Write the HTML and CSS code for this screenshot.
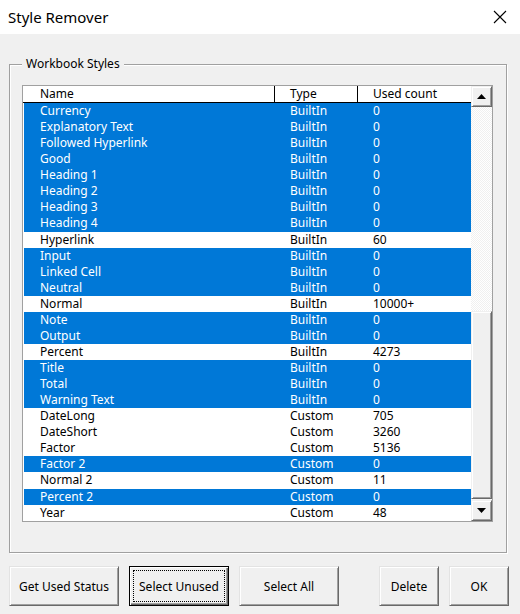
FILE: index.html
```html
<!DOCTYPE html>
<html lang="en">
<head>
    <meta charset="UTF-8">
    <title>Style Remover</title>
    <link rel="stylesheet" href="styles.css">
</head>
<body>
    <header class="titlebar">
        <span class="title">Style Remover</span>
        <svg class="close" width="14" height="14" viewBox="0 0 14 14">
            <path d="M1 1L13 13M13 1L1 13" stroke="#000" stroke-width="1.1" fill="none"/>
        </svg>
    </header>

    <fieldset class="group">
        <legend>Workbook Styles</legend>
        <div class="listbox">
            <div class="list">
                <div class="row head">
                    <span>Name</span><span>Type</span><span>Used count</span>
                </div>
                <div class="row sel"><span>Currency</span><span>BuiltIn</span><span>0</span></div>
                <div class="row sel"><span>Explanatory Text</span><span>BuiltIn</span><span>0</span></div>
                <div class="row sel"><span>Followed Hyperlink</span><span>BuiltIn</span><span>0</span></div>
                <div class="row sel"><span>Good</span><span>BuiltIn</span><span>0</span></div>
                <div class="row sel"><span>Heading 1</span><span>BuiltIn</span><span>0</span></div>
                <div class="row sel"><span>Heading 2</span><span>BuiltIn</span><span>0</span></div>
                <div class="row sel"><span>Heading 3</span><span>BuiltIn</span><span>0</span></div>
                <div class="row sel"><span>Heading 4</span><span>BuiltIn</span><span>0</span></div>
                <div class="row"><span>Hyperlink</span><span>BuiltIn</span><span>60</span></div>
                <div class="row sel"><span>Input</span><span>BuiltIn</span><span>0</span></div>
                <div class="row sel"><span>Linked Cell</span><span>BuiltIn</span><span>0</span></div>
                <div class="row sel"><span>Neutral</span><span>BuiltIn</span><span>0</span></div>
                <div class="row"><span>Normal</span><span>BuiltIn</span><span>10000+</span></div>
                <div class="row sel"><span>Note</span><span>BuiltIn</span><span>0</span></div>
                <div class="row sel"><span>Output</span><span>BuiltIn</span><span>0</span></div>
                <div class="row"><span>Percent</span><span>BuiltIn</span><span>4273</span></div>
                <div class="row sel"><span>Title</span><span>BuiltIn</span><span>0</span></div>
                <div class="row sel"><span>Total</span><span>BuiltIn</span><span>0</span></div>
                <div class="row sel"><span>Warning Text</span><span>BuiltIn</span><span>0</span></div>
                <div class="row"><span>DateLong</span><span>Custom</span><span>705</span></div>
                <div class="row"><span>DateShort</span><span>Custom</span><span>3260</span></div>
                <div class="row"><span>Factor</span><span>Custom</span><span>5136</span></div>
                <div class="row sel"><span>Factor 2</span><span>Custom</span><span>0</span></div>
                <div class="row"><span>Normal 2</span><span>Custom</span><span>11</span></div>
                <div class="row sel"><span>Percent 2</span><span>Custom</span><span>0</span></div>
                <div class="row"><span>Year</span><span>Custom</span><span>48</span></div>
            </div>
            <div class="scrollbar">
                <div class="sb-btn">
                    <svg width="9" height="5" viewBox="0 0 9 5"><path d="M4.5 0L9 5H0Z" fill="#000"/></svg>
                </div>
                <div class="sb-track"></div>
                <div class="sb-thumb"></div>
                <div class="sb-gap"></div>
                <div class="sb-btn">
                    <svg width="9" height="5" viewBox="0 0 9 5"><path d="M0 0H9L4.5 5Z" fill="#000"/></svg>
                </div>
            </div>
        </div>
    </fieldset>

    <div class="buttons">
        <button class="btn wide">Get Used Status</button>
        <button class="btn default">Select Unused</button>
        <button class="btn">Select All</button>
        <button class="btn small push">Delete</button>
        <button class="btn small">OK</button>
    </div>
</body>
</html>
```

FILE: styles.css
```css
body {
    margin: 0;
    width: 520px;
    height: 614px;
    overflow: hidden;
    background-color: #f0f0f0;
    font-family: "Noto Sans", sans-serif;
    font-size: 12px;
    color: #000;
}

.titlebar {
    height: 34px;
    background-color: #fff;
    display: flex;
    align-items: center;
    justify-content: space-between;
    padding: 0 13px 0 8px;
}

.title {
    font-size: 15px;
}

.group {
    margin: 22px 13px 0 9px;
    padding: 13px 13px 30px 12px;
    border: 1px solid #a0a0a0;
    box-shadow: inset 1px 1px 0 #fff, 1px 1px 0 #fff;
}

.group legend {
    padding: 0 4px;
    line-height: 16px;
    background-color: #f0f0f0;
}

.listbox {
    display: flex;
    height: 437px;
    box-sizing: border-box;
    border: 1px solid #a0a0a0;
    background-color: #fff;
}

.list {
    flex: 1;
}

.row {
    display: grid;
    grid-template-columns: 252px 83px 1fr;
    height: 16.07px;
    line-height: 16px;
    white-space: nowrap;
}

.row span {
    padding-left: 15px;
}

.row span:first-child {
    padding-left: 17px;
}

.row.head {
    height: 16px;
    border-bottom: 1px solid #000;
}

.row.head span:not(:last-child) {
    border-right: 1px solid #000;
}

.row.sel {
    background-color: #0078d7;
    color: #fff;
    box-shadow: inset 1px 0 0 #fff;
}

.scrollbar {
    width: 21px;
    display: flex;
    flex-direction: column;
}

.sb-btn,
.sb-thumb {
    box-sizing: border-box;
    background-color: #f0f0f0;
    border: 1px solid;
    border-color: #f0f0f0 #696969 #696969 #f0f0f0;
    box-shadow: inset 1px 1px 0 #fff, inset -1px -1px 0 #a0a0a0;
}

.sb-btn {
    height: 21px;
    display: flex;
    align-items: center;
    justify-content: center;
}

.sb-track {
    height: 204px;
    background: conic-gradient(#fff 25%, #f0f0f0 0 50%, #fff 0 75%, #f0f0f0 0) 0 0 / 2px 2px;
}

.sb-thumb {
    height: 188px;
}

.sb-gap {
    height: 1px;
    background-color: #f6f6f6;
}

.buttons {
    display: flex;
    gap: 10px;
    margin: 13px 0 0 9px;
}

.btn {
    box-sizing: border-box;
    width: 100px;
    height: 40px;
    padding: 0;
    font-family: inherit;
    font-size: 12px;
    color: #000;
    background-color: #f0f0f0;
    border: 1px solid;
    border-color: #e3e3e3 #696969 #696969 #e3e3e3;
    box-shadow: inset 1px 1px 0 #fff, inset -1px -1px 0 #a0a0a0;
}

.btn.wide {
    width: 110px;
}

.btn.small {
    width: 60px;
}

.btn.push {
    margin-left: 30px;
}

.btn.default {
    border: 1px solid #000;
    box-shadow: inset 1px 1px 0 #fff, inset -1px -1px 0 #696969, inset -2px -2px 0 #a0a0a0;
    outline: 1px dotted #000;
    outline-offset: -5px;
}
```
